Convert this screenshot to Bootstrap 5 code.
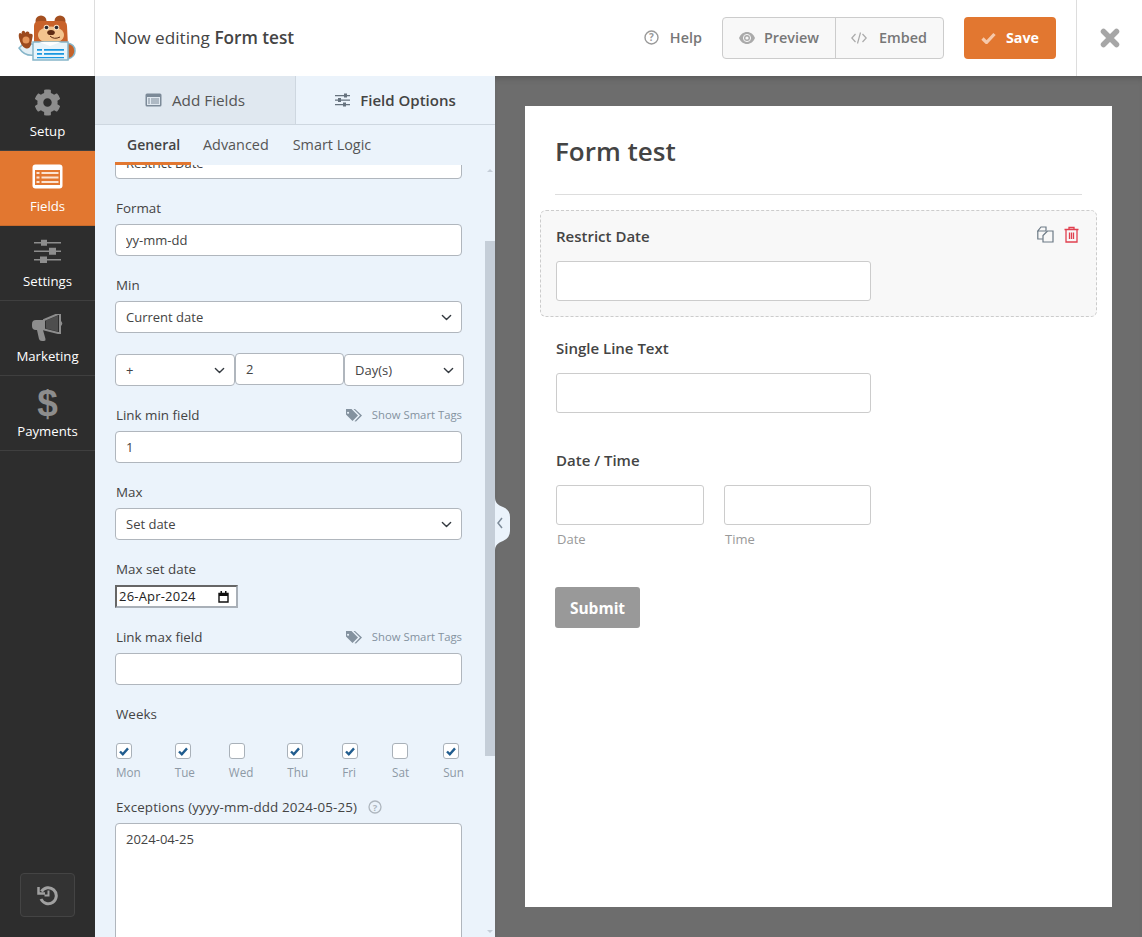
<!DOCTYPE html>
<html lang="en">
<head>
<meta charset="UTF-8">
<meta name="viewport" content="width=device-width, initial-scale=1.0">
<title>Form test</title>
<link href="https://cdn.jsdelivr.net/npm/bootstrap@5.3.1/dist/css/bootstrap.min.css" rel="stylesheet">
<script src="https://cdn.jsdelivr.net/npm/bootstrap@5.3.1/dist/js/bootstrap.bundle.min.js"></script>
<style>
    html, body { height: 100%; overflow: hidden; }
    body { font-family: "Open Sans", "Liberation Sans", sans-serif; font-size: 13px; color: #444; background: #6d6d6d; }

    /* top bar */
    .top-bar { height: 76px; background: #fff; position: relative; z-index: 3; }
    .logo-cell { width: 95px; border-right: 1px solid #ddd; }
    .editing-title { font-size: 17.2px; margin-left: 19px; color: #444; }
    .editing-title b { font-weight: 600; }
    .help-link { color: #777; font-size: 14.4px; font-weight: 600; margin-right: 20px; gap: 11px; }
    .top-btns { height: 42px; border: 1px solid #ccc; border-radius: 4px; background: #f8f8f8; color: #777; font-size: 14.4px; font-weight: 600; margin-right: 20px; }
    .top-btns span { gap: 10px; padding: 0 15px; }
    .top-btns span:first-child { padding-right: 16px; gap: 9px; padding-left: 16px; }
    .top-btns span + span { border-left: 1px solid #ccc; gap: 12px; padding-right: 16px; }
    .save-btn { width: 92px; height: 42px; background: #e27730; border-radius: 4px; color: #fff; font-size: 14.3px; font-weight: 700; gap: 10px; margin-right: 20px; }
    .close-cell { width: 66px; border-left: 1px solid #ddd; }

    /* left nav */
    .work-area { height: 861px; }
    .side-nav { width: 95px; background: #2d2d2d; }
    .nav-item-box { height: 75px; border-bottom: 1px solid #3f3f3f; color: #fff; font-size: 13.2px; font-weight: 500; padding-top: 13px; }
    .nav-item-box.on { background: #e27730; border-bottom-color: #c96a2b; }
    .nav-icon { height: 33px; }
    .dollar-icon { font-size: 37px; line-height: 29px; font-weight: 700; color: #8d8d8d; font-family: "Liberation Sans", sans-serif; }
    .history-btn { width: 55px; height: 44px; margin: 0 0 20px 20px; background: #333; border: 1px solid #444; border-radius: 4px; }

    /* panel */
    .panel-side { width: 400px; background: #ebf3fb; position: relative; }
    .panel-tabs { height: 49px; border-bottom: 1px solid #ced7e0; font-size: 15.3px; }
    .panel-tab { width: 200px; gap: 10px; color: #555; background: #e0e8f0; }
    .panel-tab.on { background: #ebf3fb; border-left: 1px solid #ced7e0; font-weight: 600; font-size: 15px; color: #444; }
    .sub-tabs { height: 40px; padding-left: 20px; font-size: 14.4px; color: #555; }
    .sub-tab { padding: 0 12px; line-height: 40px; }
    .sub-tab.on { width: 76px; font-size: 14px; font-weight: 600; border-bottom: 3px solid #e27730; color: #444; padding-right: 0; }
    .fields-scroll { height: 772px; overflow: hidden; padding: 0 33px 0 20px; }
    .opt-group { margin-bottom: 21px; }
    .opt-group.first-cut { margin-top: -18px; }
    .opt-label { font-size: 13.4px; color: #444; line-height: 16px; margin-bottom: 8px; padding-left: 1px; }
    .opt-input.form-control, .opt-input.form-select { height: 32px; min-height: 0; padding: 0 10px; font-size: 13px; color: #444; border: 1px solid #b0b6bd; border-radius: 4px; box-shadow: none; background-color: #fff; }
    .opt-input.form-select { padding-top: 1px; background-size: 13px 11px; background-position: right 8px center; }
    .triple-row { margin-top: -1px; margin-bottom: 21px; margin-right: -2px; }
    .triple-row .sel-side { width: 120px; flex: none; margin-top: 1px; }
    .triple-row .num-side { width: 109px; flex: none; }
    .smart-tags { font-size: 11.3px; color: #84929f; gap: 10px; }
    .date-box { width: 123px; height: 23px; border: 2px solid; border-color: #666 #a9b0b8 #a9b0b8 #666; background: #fff; color: #222; font-size: 13px; padding: 1px 7px 0 2px; margin-bottom: 21px; letter-spacing: .2px; }
    .week-row { margin: 21px -2px 17px 1px; }
    .week-day { font-size: 11.7px; color: #8d99a5; gap: 5px; }
    .week-check { appearance: none; width: 16px; height: 16px; margin: 0; border: 1px solid #a9b1b9; border-radius: 3px; background: #fff center / 12px 12px no-repeat; display: block; }
    .week-check:checked { background-image: url("data:image/svg+xml,%3Csvg xmlns='http://www.w3.org/2000/svg' viewBox='0 0 12 12'%3E%3Cpath d='M2 6.500l2.800 2.800L10 3.400' fill='none' stroke='%23215d8f' stroke-width='2.400'/%3E%3C/svg%3E"); }
    .except-label { letter-spacing: .12px; gap: 11px; }
    .opt-area.form-control { height: 180px; padding: 6px 10px; font-size: 13px; color: #444; border: 1px solid #b0b6bd; border-radius: 4px; resize: none; box-shadow: none; }
    .fake-bar { position: absolute; right: 0; top: 89px; bottom: 0; width: 10px; }
    .fake-thumb { position: absolute; left: 0; right: 0; top: 76px; height: 515px; background: #c5ced8; }
    .fake-up, .fake-down { position: absolute; left: 2px; width: 0; height: 0; border-left: 3px solid transparent; border-right: 3px solid transparent; }
    .fake-up { top: 4px; border-bottom: 3px solid #c5ced8; }
    .fake-down { bottom: 4px; border-top: 3px solid #c5ced8; }
    .collapse-tab { position: absolute; left: 400px; top: 421px; z-index: 2; display: block; }

    /* preview */
    .preview-side { background: #6d6d6d; padding: 30px; box-shadow: inset 0 6px 8px -6px rgba(0,0,0,.3); }
    .form-sheet { width: 587px; height: 801px; background: #fff; padding: 29px 30px 0; }
    .sheet-title { font-size: 26px; font-weight: 600; color: #444; line-height: 32px; padding-bottom: 27px; margin-bottom: 15px; border-bottom: 1px solid #ddd; }
    .form-field { margin: 0 -15px 0; padding: 15px 15px 15px; border: 1px dashed transparent; height: 112px; position: relative; }
    .form-field.picked { height: 107px; margin-bottom: 5px; background: #f8f8f8; border-color: #ccc; border-radius: 6px; }
    .field-title { font-size: 15px; font-weight: 600; color: #444; line-height: 20px; margin-bottom: 15px; }
    .field-box { width: 315px; height: 40px; background: #fff; border: 1px solid #ccc; border-radius: 3px; }
    .two-cols { width: 315px; gap: 20px; }
    .two-cols > div { flex: 1; }
    .two-cols .field-box { width: 100%; }
    .two-cols .field-box.d-one { width: 148px; }
    .sub-note { font-size: 13px; color: #999; margin-top: 5px; line-height: 18px; padding-left: 1px; }
    .field-tools { position: absolute; top: 15px; right: 16px; gap: 9px; }
    .submit-btn { width: 85px; height: 41px; background: #999; color: #fff; font-size: 15.5px; font-weight: 700; border-radius: 3px; margin-top: 41px; padding-top: 2px; }
</style>
</head>
<body>

<header class="top-bar d-flex align-items-center">
    <div class="logo-cell h-100 d-flex align-items-center justify-content-center">
        <svg width="60" height="48" viewBox="0 0 60 48">
            <path d="M2 34q6 9 16 7v-10l-10-3z" fill="#e3eff5" stroke="#86b5c9" stroke-width="1.500"/>
            <path d="M50 29q8 1 8 8 0 6-7 8z" fill="#c4622a" stroke="#86b5c9" stroke-width="1.500"/>
            <circle cx="24" cy="7" r="5.500" fill="#a44f20"/>
            <circle cx="43" cy="7" r="5.500" fill="#a44f20"/>
            <path d="M17 12q0-5 6-5h21q6 0 6 5l1 20H17z" fill="#c8622a"/>
            <ellipse cx="34" cy="21" rx="13" ry="8.500" fill="#f3c48e"/>
            <circle cx="29.500" cy="13.500" r="2.800" fill="#f7e0c4"/><circle cx="39.500" cy="13.500" r="2.800" fill="#f7e0c4"/>
            <circle cx="29.500" cy="13.500" r="1.800" fill="#2a2a33"/><circle cx="39.500" cy="13.500" r="1.800" fill="#2a2a33"/>
            <ellipse cx="34" cy="18.500" rx="3.800" ry="2.600" fill="#5e2c14"/>
            <path d="M33 22q4 4 10 1" fill="none" stroke="#5e2c14" stroke-width="1"/>
            <path d="M16 28h35v18H16z" fill="#e8f4fa" stroke="#86b5c9" stroke-width="1.500"/>
            <path d="M22 28l11 4 11-4z" fill="#fff"/>
            <path d="M20 35h5v1.800h-5zM27 35h20v1.800H27zM20 39h5v1.800h-5zM27 39h20v1.800H27zM20 43h27v1.300H20z" fill="#1897e0"/>
            <path d="M2 24c-1-5 1-6 2.500-4 0-4 3-4 4-1 1-2 4-2 4 1 2-1 4 0 3 3l-1.500 8q-2 5-6 3-4-2-6-10z" fill="#9c4a1e"/>
            <circle cx="9" cy="26" r="3.500" fill="#e5965c"/>
        </svg>
    </div>
    <div class="editing-title flex-grow-1">Now editing <b>Form test</b></div>
    <span class="help-link d-flex align-items-center">
        <svg width="15" height="15" viewBox="0 0 15 15"><circle cx="7.500" cy="7.500" r="6.500" fill="none" stroke="#999" stroke-width="1.400"/><text x="7.500" y="11" text-anchor="middle" font-size="10" font-weight="700" fill="#999">?</text></svg>
        Help
    </span>
    <div class="top-btns d-flex align-items-stretch">
        <span class="d-flex align-items-center">
            <svg width="16" height="12" viewBox="0 0 16 12"><path d="M8 0C4.500 0 1.500 2.200 0 6c1.500 3.800 4.500 6 8 6s6.500-2.200 8-6c-1.500-3.800-4.500-6-8-6z" fill="#aaa"/><circle cx="8" cy="6" r="3.600" fill="#aaa" stroke="#f8f8f8" stroke-width="1"/><circle cx="8" cy="6" r="1.600" fill="#f8f8f8"/></svg>
            Preview
        </span>
        <span class="d-flex align-items-center">
            <svg width="16" height="12" viewBox="0 0 16 12" fill="none" stroke="#aaa" stroke-width="1.200"><path d="M4.500 2L.8 6l3.700 4M11.500 2l3.700 4-3.700 4M9.500 .5L6.500 11.500"/></svg>
            Embed
        </span>
    </div>
    <div class="save-btn d-flex align-items-center justify-content-center">
        <svg width="15" height="12" viewBox="0 0 15 12"><path d="M1.500 6.500l4 4 8-8.500" fill="none" stroke="#f6c9ab" stroke-width="3.200"/></svg>
        Save
    </div>
    <div class="close-cell h-100 d-flex align-items-center justify-content-center">
        <svg width="20" height="20" viewBox="0 0 20 20"><path d="M3.500 3.500l13 13M16.500 3.500l-13 13" stroke="#a6a6a6" stroke-width="5.500" stroke-linecap="round"/></svg>
    </div>
</header>

<div class="work-area d-flex">
    <nav class="side-nav d-flex flex-column">
        <div class="nav-item-box d-flex flex-column align-items-center">
            <div class="nav-icon"><svg width="27" height="27" viewBox="0 0 512 512"><path fill="#8d8d8d" d="M487.4 315.7l-42.6-24.6c4.300-23.200 4.300-47 0-70.200l42.600-24.600c4.900-2.800 7.100-8.600 5.500-14-11.100-35.600-30-67.800-54.700-94.600-3.800-4.100-10-5.100-14.800-2.300L380.800 110c-17.900-15.400-38.500-27.300-60.800-35.100V25.800c0-5.600-3.900-10.500-9.400-11.700-36.700-8.200-74.300-7.800-109.200 0-5.500 1.200-9.400 6.100-9.400 11.700V75c-22.200 7.900-42.800 19.800-60.800 35.100L88.700 85.500c-4.900-2.800-11-1.900-14.800 2.300-24.700 26.700-43.600 58.900-54.700 94.600-1.700 5.400.6 11.200 5.500 14L67.300 221c-4.300 23.200-4.300 47 0 70.200l-42.600 24.600c-4.900 2.800-7.100 8.600-5.500 14 11.100 35.600 30 67.800 54.700 94.600 3.800 4.100 10 5.100 14.800 2.300l42.600-24.600c17.900 15.400 38.500 27.300 60.800 35.100v49.200c0 5.600 3.900 10.500 9.400 11.700 36.700 8.200 74.300 7.800 109.200 0 5.500-1.200 9.400-6.100 9.400-11.700v-49.200c22.200-7.900 42.800-19.800 60.800-35.100l42.600 24.600c4.900 2.800 11 1.900 14.800-2.300 24.700-26.700 43.600-58.900 54.700-94.600 1.500-5.500-.7-11.300-5.600-14.100zM256 336c-44.100 0-80-35.900-80-80s35.900-80 80-80 80 35.900 80 80-35.900 80-80 80z"/></svg></div>
            Setup
        </div>
        <div class="nav-item-box on d-flex flex-column align-items-center">
            <div class="nav-icon"><svg width="31" height="25" viewBox="0 0 31 25"><rect x=".5" y=".5" width="30" height="24" rx="3" fill="#fff"/><rect x="3" y="6" width="25" height="15" fill="#e27730"/><path d="M4.500 8h3v2h-3zM9.500 8h17v2h-17zM4.500 12.500h3v2h-3zM9.500 12.500h17v2h-17zM4.500 17h3v2h-3zM9.500 17h17v2h-17z" fill="#fbe3d2"/></svg></div>
            Fields
        </div>
        <div class="nav-item-box d-flex flex-column align-items-center">
            <div class="nav-icon"><svg width="27" height="25" viewBox="0 0 27 25"><path d="M0 3h27v1.600H0zM0 11.500h27v1.600H0zM0 20h27v1.600H0z" fill="#8d8d8d"/><path d="M7 .8h6v6H7zM15 8.800h7v7h-7zM6 17.600h7v6.500H6z" fill="#8d8d8d"/></svg></div>
            Settings
        </div>
        <div class="nav-item-box d-flex flex-column align-items-center">
            <div class="nav-icon"><svg width="31" height="27" viewBox="0 0 31 27"><path d="M26 0h2v19h-2L12 15.500V6z" fill="none" stroke="#8d8d8d" stroke-width="2"/><path d="M12 6H4Q0 6 0 10v2q0 4 4 4h1l2 9q.5 2 3 2h2q2 0 1.500-2L11 16h2l-1-10z" fill="#8d8d8d"/><path d="M14 6.500l12-5v16l-12-3z" fill="#8d8d8d" opacity=".35"/><path d="M29 7q2.500 2.500 0 5z" fill="#8d8d8d"/></svg></div>
            Marketing
        </div>
        <div class="nav-item-box d-flex flex-column align-items-center">
            <div class="nav-icon dollar-icon">$</div>
            Payments
        </div>
        <div class="history-btn mt-auto d-flex align-items-center justify-content-center">
            <svg width="22" height="22" viewBox="0 0 22 22" fill="none" stroke="#a0a0a0" stroke-width="3"><path d="M4.500 7.500A8 8 0 1 1 4 15"/><path d="M1.500 3v6.500H8" stroke-width="2.500"/><path d="M11.500 6.500v5h-4" stroke-width="2"/></svg>
        </div>
    </nav>

    <section class="panel-side">
        <div class="panel-tabs d-flex">
            <div class="panel-tab d-flex align-items-center justify-content-center">
                <svg width="17" height="14" viewBox="0 0 17 14"><rect x=".5" y=".5" width="16" height="13" rx="1.500" fill="#7c8a98"/><rect x="2" y="4" width="13" height="8" fill="#e0e8f0"/><path d="M3 5.500h2v1H3zM6 5.500h8v1H6zM3 7.500h2v1H3zM6 7.500h8v1H6zM3 9.500h2v1H3zM6 9.500h8v1H6z" fill="#7c8a98"/></svg>
                Add Fields
            </div>
            <div class="panel-tab on d-flex align-items-center justify-content-center">
                <svg width="15" height="14" viewBox="0 0 15 14"><path d="M0 2h15v1.200H0zM0 6.500h15v1.200H0zM0 11h15v1.200H0z" fill="#66727e"/><path d="M9 .5h3v4H9zM3 5h3v4H3zM8 9.500h3v4H8z" fill="#66727e"/></svg>
                Field Options
            </div>
        </div>
        <div class="sub-tabs d-flex">
            <div class="sub-tab on">General</div>
            <div class="sub-tab">Advanced</div>
            <div class="sub-tab">Smart Logic</div>
        </div>
        <div class="fields-scroll">
            <div class="opt-group first-cut"><input class="opt-input form-control" value="Restrict Date"></div>
            <div class="opt-group">
                <div class="opt-label">Format</div>
                <input class="opt-input form-control" value="yy-mm-dd">
            </div>
            <div class="opt-group">
                <div class="opt-label">Min</div>
                <select class="opt-input form-select"><option>Current date</option></select>
            </div>
            <div class="triple-row d-flex">
                <select class="opt-input form-select sel-side"><option>+</option></select>
                <input class="opt-input form-control num-side" value="2">
                <select class="opt-input form-select sel-side"><option>Day(s)</option></select>
            </div>
            <div class="opt-group">
                <div class="opt-label d-flex justify-content-between">Link min field
                    <span class="smart-tags d-flex align-items-center">
                        <svg width="16" height="13" viewBox="0 0 16 13"><path fill-rule="evenodd" d="M0 0h5.500l6.500 6.500L6.500 12 0 5.500zM2 2.800a1 1 0 1 0 .1 0z" fill="#84929f"/><path d="M7.500 0h1.500l7 6.500L10 12.500l-1.500-.2L14 6.500z" fill="#84929f"/></svg>
                        Show Smart Tags
                    </span>
                </div>
                <input class="opt-input form-control" value="1">
            </div>
            <div class="opt-group">
                <div class="opt-label">Max</div>
                <select class="opt-input form-select"><option>Set date</option></select>
            </div>
            <div class="opt-label">Max set date</div>
            <div class="date-box d-flex align-items-center justify-content-between">
                26-Apr-2024
                <svg width="11" height="12" viewBox="0 0 11 12"><path d="M1 2.500h9v8.500H1z" fill="none" stroke="#111" stroke-width="1.400"/><path d="M1 2h9v3H1zM2.500 0h1.500v2H2.500zM7 0h1.500v2H7z" fill="#111"/></svg>
            </div>
            <div class="opt-group">
                <div class="opt-label d-flex justify-content-between">Link max field
                    <span class="smart-tags d-flex align-items-center">
                        <svg width="16" height="13" viewBox="0 0 16 13"><path fill-rule="evenodd" d="M0 0h5.500l6.500 6.500L6.500 12 0 5.500zM2 2.800a1 1 0 1 0 .1 0z" fill="#84929f"/><path d="M7.500 0h1.500l7 6.500L10 12.500l-1.500-.2L14 6.500z" fill="#84929f"/></svg>
                        Show Smart Tags
                    </span>
                </div>
                <input class="opt-input form-control" value="">
            </div>
            <div class="opt-label">Weeks</div>
            <div class="week-row d-flex justify-content-between">
                <label class="week-day d-flex flex-column"><input class="week-check" type="checkbox" checked>Mon</label>
                <label class="week-day d-flex flex-column"><input class="week-check" type="checkbox" checked>Tue</label>
                <label class="week-day d-flex flex-column"><input class="week-check" type="checkbox">Wed</label>
                <label class="week-day d-flex flex-column"><input class="week-check" type="checkbox" checked>Thu</label>
                <label class="week-day d-flex flex-column"><input class="week-check" type="checkbox" checked>Fri</label>
                <label class="week-day d-flex flex-column"><input class="week-check" type="checkbox">Sat</label>
                <label class="week-day d-flex flex-column"><input class="week-check" type="checkbox" checked>Sun</label>
            </div>
            <div class="opt-label except-label d-flex align-items-center">Exceptions (yyyy-mm-ddd 2024-05-25)
                <svg width="14" height="14" viewBox="0 0 14 14"><circle cx="7" cy="7" r="6" fill="none" stroke="#aeb6be" stroke-width="1.300"/><text x="7" y="10.500" text-anchor="middle" font-size="9.500" font-weight="700" fill="#aeb6be">?</text></svg>
            </div>
            <textarea class="opt-area form-control">2024-04-25</textarea>
        </div>
        <div class="fake-bar"><div class="fake-up"></div><div class="fake-thumb"></div><div class="fake-down"></div></div>
        <svg class="collapse-tab" width="15" height="54" viewBox="0 0 15 54"><path d="M0 0c0 6 3 8 8 10q7 3 7 10v14q0 7-7 10c-5 2-8 4-8 10z" fill="#ebf3fb"/><path d="M7 21l-4 5 4 5" fill="none" stroke="#7c8a98" stroke-width="1.500"/></svg>
    </section>

    <main class="preview-side flex-grow-1">
        <div class="form-sheet">
            <div class="sheet-title">Form test</div>
            <div class="form-field picked">
                <div class="field-title">Restrict Date</div>
                <div class="field-box"></div>
                <div class="field-tools d-flex">
                    <svg width="17" height="17" viewBox="0 0 17 17" fill="none" stroke="#6c7a86" stroke-width="1.200"><path d="M4 1h5v4H.8V5L4 1zM.8 5v8h5"/><path d="M10.500 5L6 9.500V16h10V5z"/></svg>
                    <svg width="17" height="17" viewBox="0 0 17 17" fill="none" stroke="#e0404f" stroke-width="1.300"><path d="M1.500 3.500h14M6 3.500V1.500h5v2M3 3.500V16h11V3.500M6.500 6.500V13M8.500 6.500V13M10.500 6.500V13"/></svg>
                </div>
            </div>
            <div class="form-field">
                <div class="field-title">Single Line Text</div>
                <div class="field-box"></div>
            </div>
            <div class="form-field">
                <div class="field-title">Date / Time</div>
                <div class="two-cols d-flex">
                    <div><div class="field-box d-one"></div><div class="sub-note">Date</div></div>
                    <div><div class="field-box"></div><div class="sub-note">Time</div></div>
                </div>
            </div>
            <div class="submit-btn d-flex align-items-center justify-content-center">Submit</div>
        </div>
    </main>
</div>

</body>
</html>
